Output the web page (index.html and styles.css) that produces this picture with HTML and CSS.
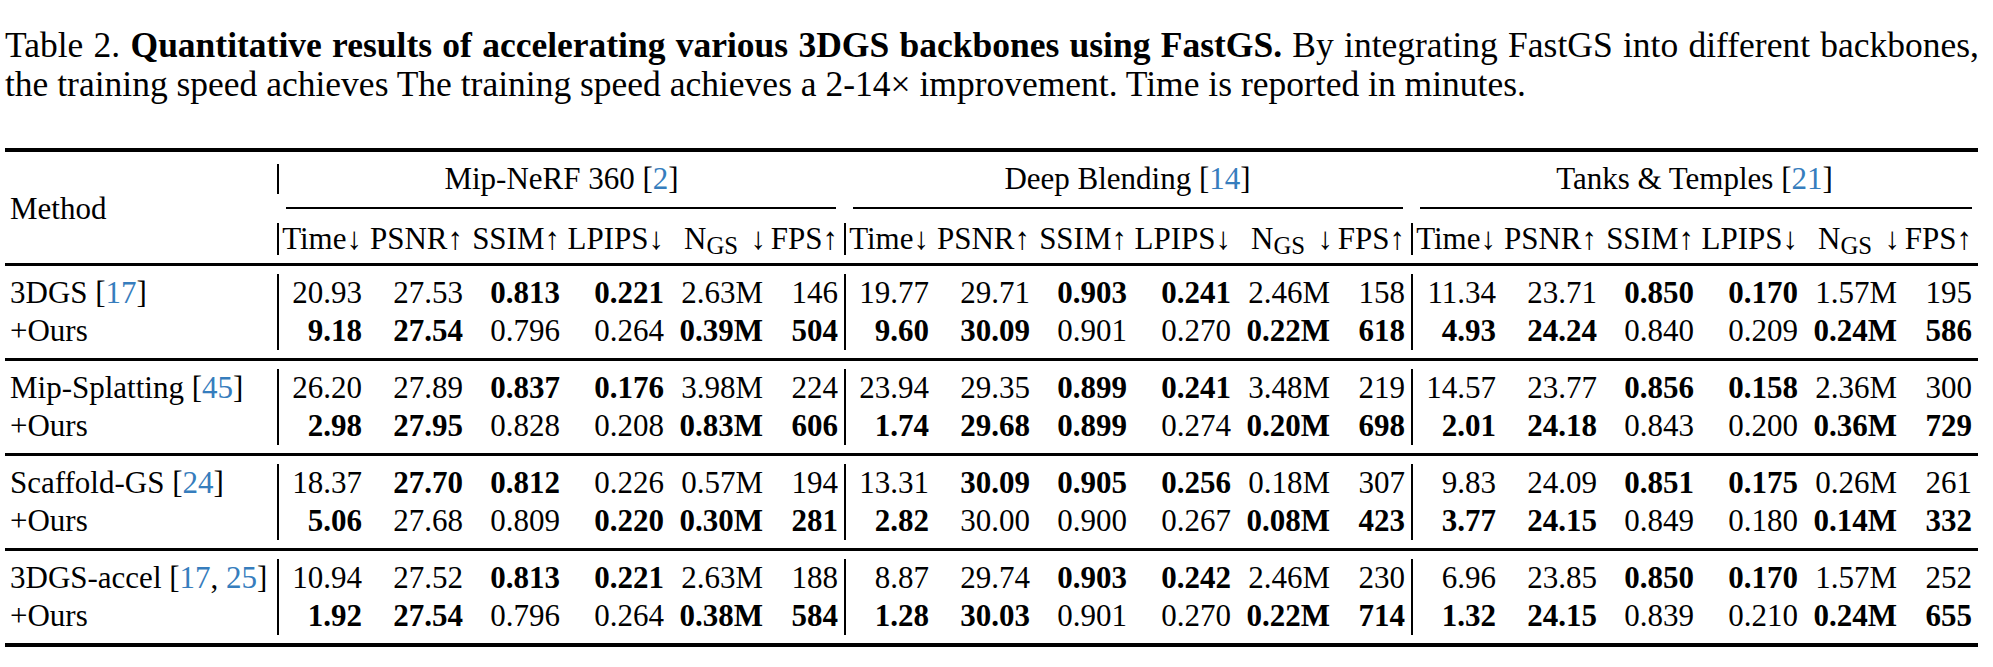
FILE: index.html
```html
<!DOCTYPE html>
<html>
<head>
<meta charset="utf-8">
<link rel="stylesheet" href="styles.css">
</head>
<body>
<div class="page">
<p class="caption"><span class="lbl">Table 2.</span> <b>Quantitative results of accelerating various 3DGS backbones using FastGS.</b> <span class="rest">By integrating FastGS into different backbones,</span> <span class="rest">the training speed achieves The training speed achieves a 2-14× improvement. Time is reported in minutes.</span></p>
<table class="results">
<colgroup>
<col class="c-method">
<col class="c-time"><col class="c-psnr"><col class="c-ssim"><col class="c-lpips"><col class="c-ngs"><col class="c-fps">
<col class="c-time"><col class="c-psnr"><col class="c-ssim"><col class="c-lpips"><col class="c-ngs"><col class="c-fps">
<col class="c-time"><col class="c-psnr"><col class="c-ssim"><col class="c-lpips"><col class="c-ngs"><col class="c-fps">
</colgroup>
<tbody>
<tr class="rule heavy"><td colspan="19"></td></tr>
<tr class="gap gap-top"><td colspan="19"></td></tr>
<tr class="grp">
<td class="method" rowspan="3">Method</td>
<td colspan="6" class="vl">Mip-NeRF 360 [<span class="cite">2</span>]</td>
<td colspan="6">Deep Blending [<span class="cite">14</span>]</td>
<td colspan="6">Tanks &amp; Temples [<span class="cite">21</span>]</td>
</tr>
<tr class="cmid">
<td colspan="6"><div class="cm"></div></td>
<td colspan="6"><div class="cm"></div></td>
<td colspan="6"><div class="cm last"></div></td>
</tr>
<tr class="hdr">
<td class="vl">Time↓</td><td>PSNR↑</td><td>SSIM↑</td><td>LPIPS↓</td><td class="ngs">N<sub>GS</sub><span class="arr">↓</span></td><td class="fps">FPS↑</td>
<td class="vl">Time↓</td><td>PSNR↑</td><td>SSIM↑</td><td>LPIPS↓</td><td class="ngs">N<sub>GS</sub><span class="arr">↓</span></td><td class="fps">FPS↑</td>
<td class="vl">Time↓</td><td>PSNR↑</td><td>SSIM↑</td><td>LPIPS↓</td><td class="ngs">N<sub>GS</sub><span class="arr">↓</span></td><td class="fps">FPS↑</td>
</tr>
<tr class="gap gap-hdr"><td colspan="19"></td></tr>
<tr class="rule mid"><td colspan="19"></td></tr>
<tr class="gap gap-a"><td colspan="19"></td></tr>
<tr class="row">
<td class="m">3DGS [<span class="cite">17</span>]</td>
<td class="vl">20.93</td><td>27.53</td><td><b>0.813</b></td><td><b>0.221</b></td><td>2.63M</td><td class="fps">146</td>
<td class="vl">19.77</td><td>29.71</td><td><b>0.903</b></td><td><b>0.241</b></td><td>2.46M</td><td class="fps">158</td>
<td class="vl">11.34</td><td>23.71</td><td><b>0.850</b></td><td><b>0.170</b></td><td>1.57M</td><td class="fps">195</td>
</tr>
<tr class="row">
<td class="m">+Ours</td>
<td class="vl"><b>9.18</b></td><td><b>27.54</b></td><td>0.796</td><td>0.264</td><td><b>0.39M</b></td><td class="fps"><b>504</b></td>
<td class="vl"><b>9.60</b></td><td><b>30.09</b></td><td>0.901</td><td>0.270</td><td><b>0.22M</b></td><td class="fps"><b>618</b></td>
<td class="vl"><b>4.93</b></td><td><b>24.24</b></td><td>0.840</td><td>0.209</td><td><b>0.24M</b></td><td class="fps"><b>586</b></td>
</tr>
<tr class="gap gap-b"><td colspan="19"></td></tr>
<tr class="rule mid"><td colspan="19"></td></tr>
<tr class="gap gap-a"><td colspan="19"></td></tr>
<tr class="row">
<td class="m">Mip-Splatting [<span class="cite">45</span>]</td>
<td class="vl">26.20</td><td>27.89</td><td><b>0.837</b></td><td><b>0.176</b></td><td>3.98M</td><td class="fps">224</td>
<td class="vl">23.94</td><td>29.35</td><td><b>0.899</b></td><td><b>0.241</b></td><td>3.48M</td><td class="fps">219</td>
<td class="vl">14.57</td><td>23.77</td><td><b>0.856</b></td><td><b>0.158</b></td><td>2.36M</td><td class="fps">300</td>
</tr>
<tr class="row">
<td class="m">+Ours</td>
<td class="vl"><b>2.98</b></td><td><b>27.95</b></td><td>0.828</td><td>0.208</td><td><b>0.83M</b></td><td class="fps"><b>606</b></td>
<td class="vl"><b>1.74</b></td><td><b>29.68</b></td><td><b>0.899</b></td><td>0.274</td><td><b>0.20M</b></td><td class="fps"><b>698</b></td>
<td class="vl"><b>2.01</b></td><td><b>24.18</b></td><td>0.843</td><td>0.200</td><td><b>0.36M</b></td><td class="fps"><b>729</b></td>
</tr>
<tr class="gap gap-b"><td colspan="19"></td></tr>
<tr class="rule mid"><td colspan="19"></td></tr>
<tr class="gap gap-a"><td colspan="19"></td></tr>
<tr class="row">
<td class="m">Scaffold-GS [<span class="cite">24</span>]</td>
<td class="vl">18.37</td><td><b>27.70</b></td><td><b>0.812</b></td><td>0.226</td><td>0.57M</td><td class="fps">194</td>
<td class="vl">13.31</td><td><b>30.09</b></td><td><b>0.905</b></td><td><b>0.256</b></td><td>0.18M</td><td class="fps">307</td>
<td class="vl">9.83</td><td>24.09</td><td><b>0.851</b></td><td><b>0.175</b></td><td>0.26M</td><td class="fps">261</td>
</tr>
<tr class="row">
<td class="m">+Ours</td>
<td class="vl"><b>5.06</b></td><td>27.68</td><td>0.809</td><td><b>0.220</b></td><td><b>0.30M</b></td><td class="fps"><b>281</b></td>
<td class="vl"><b>2.82</b></td><td>30.00</td><td>0.900</td><td>0.267</td><td><b>0.08M</b></td><td class="fps"><b>423</b></td>
<td class="vl"><b>3.77</b></td><td><b>24.15</b></td><td>0.849</td><td>0.180</td><td><b>0.14M</b></td><td class="fps"><b>332</b></td>
</tr>
<tr class="gap gap-b"><td colspan="19"></td></tr>
<tr class="rule mid"><td colspan="19"></td></tr>
<tr class="gap gap-a"><td colspan="19"></td></tr>
<tr class="row">
<td class="m">3DGS-accel [<span class="cite">17</span>, <span class="cite">25</span>]</td>
<td class="vl">10.94</td><td>27.52</td><td><b>0.813</b></td><td><b>0.221</b></td><td>2.63M</td><td class="fps">188</td>
<td class="vl">8.87</td><td>29.74</td><td><b>0.903</b></td><td><b>0.242</b></td><td>2.46M</td><td class="fps">230</td>
<td class="vl">6.96</td><td>23.85</td><td><b>0.850</b></td><td><b>0.170</b></td><td>1.57M</td><td class="fps">252</td>
</tr>
<tr class="row">
<td class="m">+Ours</td>
<td class="vl"><b>1.92</b></td><td><b>27.54</b></td><td>0.796</td><td>0.264</td><td><b>0.38M</b></td><td class="fps"><b>584</b></td>
<td class="vl"><b>1.28</b></td><td><b>30.03</b></td><td>0.901</td><td>0.270</td><td><b>0.22M</b></td><td class="fps"><b>714</b></td>
<td class="vl"><b>1.32</b></td><td><b>24.15</b></td><td>0.839</td><td>0.210</td><td><b>0.24M</b></td><td class="fps"><b>655</b></td>
</tr>
<tr class="gap gap-b"><td colspan="19"></td></tr>
<tr class="rule heavy"><td colspan="19"></td></tr>
</tbody>
</table>
</div>
</body>
</html>
```

FILE: styles.css
```css
html, body {
  margin: 0;
  padding: 0;
  background: #ffffff;
}

body {
  color: #000000;
  font-family: "Liberation Serif", "Times New Roman", serif;
}

.page {
  padding: 26px 0 0 5px;
}

.caption {
  margin: 0;
  width: 1974px;
  font-size: 35.5px;
  line-height: 39px;
  text-align: justify;
  text-align-last: left;
}

.caption b {
  font-weight: 700;
}

.results {
  margin-top: 44px;
  border-collapse: separate;
  border-spacing: 0;
  table-layout: fixed;
  width: 1973px;
  font-size: 31px;
}

.results td {
  padding: 0;
  white-space: nowrap;
}

.results b {
  font-weight: 700;
}

.c-method { width: 272px; }
.c-time { width: 90px; }
.c-psnr { width: 101px; }
.c-ssim { width: 97px; }
.c-lpips { width: 104px; }
.c-ngs { width: 99px; }
.c-fps { width: 76px; }

.cite {
  color: #367dbd;
}

.vl {
  border-left: 2px solid #000000;
}

.rule td {
  background: #000000;
  font-size: 0;
  line-height: 0;
}

.rule.heavy td { height: 4px; }
.rule.mid td { height: 3px; }

.gap td {
  font-size: 0;
  line-height: 0;
}

.gap-top td { height: 12px; }
.gap-hdr td { height: 8px; }
.gap-a td { height: 8px; }
.gap-b td { height: 8px; }

.grp td {
  line-height: 30px;
  text-align: center;
}

.grp td.method {
  text-align: left;
  padding-left: 5px;
  vertical-align: middle;
}

.cmid td {
  vertical-align: top;
}

.cm {
  height: 1.5px;
  margin: 13px 8px 14px 9px;
  background: #000000;
}

.cm.last {
  margin-left: 9px;
  margin-right: 6px;
}

.hdr td {
  line-height: 32px;
  text-align: right;
  padding: 0 5px 0 1px;
}

.hdr td.ngs {
  padding-right: 2px;
}

.hdr td.fps {
  padding-right: 6px;
}

.hdr sub {
  font-size: 0.8em;
  line-height: 0;
  vertical-align: -0.22em;
}

.hdr .arr {
  margin-left: 0.4em;
}

.row td {
  line-height: 38px;
  text-align: right;
  padding: 0 5px 0 0;
}

.row td.m {
  text-align: left;
  padding-left: 5px;
}

.row td.fps {
  padding-right: 6px;
}
```
